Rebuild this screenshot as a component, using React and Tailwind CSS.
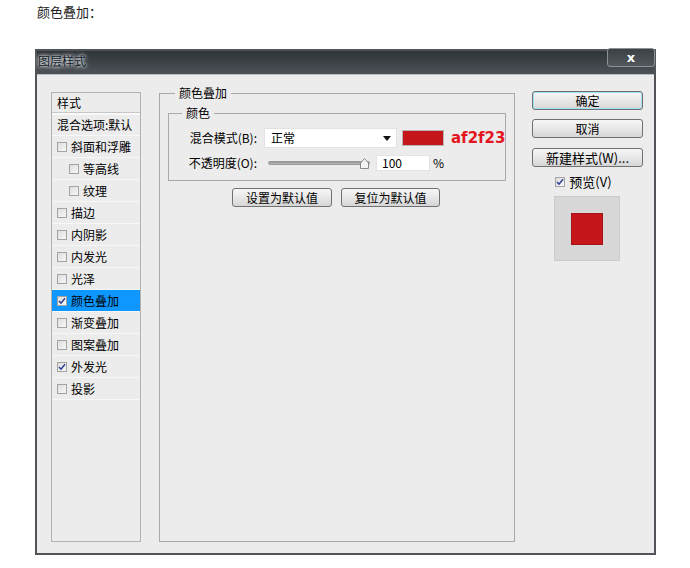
import React from "react";

const items = [
  { label: "斜面和浮雕" },
  { label: "等高线", indent: true },
  { label: "纹理", indent: true },
  { label: "描边" },
  { label: "内阴影" },
  { label: "内发光" },
  { label: "光泽" },
  { label: "颜色叠加", checked: true, active: true },
  { label: "渐变叠加" },
  { label: "图案叠加" },
  { label: "外发光", checked: true },
  { label: "投影" },
];

const Check = ({ checked }) => (
  <span className="w-[10px] h-[10px] border border-[#a3a3a3] bg-gradient-to-br from-[#dedede] to-[#f7f7f7] flex items-center justify-center shrink-0">
    {checked && (
      <svg width="8" height="8" viewBox="0 0 8 8">
        <path d="M1 4 L3 6.2 L7 1.2" fill="none" stroke="#2a3f8f" strokeWidth="1.5" />
      </svg>
    )}
  </span>
);

const Btn = ({ children, className = "" }) => (
  <div
    className={`h-[19px] flex items-center justify-center border border-[#707070] rounded-[3px] bg-gradient-to-b from-[#f6f6f6] via-[#e8e8e8] to-[#d6d6d6] text-[12px] text-black ${className}`}
  >
    {children}
  </div>
);

export default function App() {
  return (
    <div
      className="w-[690px] h-[568px] bg-white text-black"
      style={{ fontFamily: '"Noto Sans CJK SC", "DejaVu Sans", sans-serif' }}
    >
      <div className="h-[49px] pl-[37px] pt-[3px] text-[13px] leading-[18px] text-[#222]">颜色叠加：</div>

      {/* dialog */}
      <div className="ml-[35px] w-[621px] h-[506px] border-2 border-[#505458] relative flex flex-col bg-[#ececec]">
        <div className="h-[23px] bg-gradient-to-b from-[#2f3439] to-[#4c5257] flex items-start pt-[3px] pl-[1px]">
          <span className="text-[12px] leading-[14px] text-[#0e1b29] [text-shadow:0_0_5px_#ffffff,0_0_3px_#ffffff]">
            图层样式
          </span>
        </div>
        <div className="absolute -top-[3px] right-[-1px] w-[48px] h-[19px] rounded-[3px] border border-[#8c9196] bg-gradient-to-b from-[#3c4146] to-[#52575c] flex items-center justify-center">
          <span className="text-white font-bold text-[13px] leading-none" style={{ fontFamily: '"DejaVu Sans", sans-serif' }}>
            x
          </span>
        </div>

        {/* body */}
        <div className="flex-1 flex pl-[14px] pt-[10px] border-t border-[#b9bec2]">
          {/* list */}
          <div className="mt-[7px] w-[90px] h-[450px] shrink-0 border border-[#b2b2b2] bg-[#ececec] flex flex-col text-[12px]">
            <div className="h-[20px] flex items-center pl-[5px] border-b border-[#c8c8c8]">样式</div>
            <div className="h-[23px] flex items-center pl-[5px] border-t-2 border-[#f8f8f8] border-b border-b-[#f8f8f8]">
              混合选项:默认
            </div>
            {items.map((it) => (
              <div
                key={it.label}
                className={`h-[22px] flex items-center gap-[4px] border-b border-[#f7f7f7] ${
                  it.indent ? "pl-[17px]" : "pl-[5px]"
                } ${it.active ? "bg-[#0d97ff]" : ""}`}
              >
                <Check checked={it.checked} />
                <span>{it.label}</span>
              </div>
            ))}
          </div>

          {/* main fieldset */}
          <fieldset className="ml-[18px] w-[356px] min-w-0 shrink-0 h-[457px] border border-[#a9a9a9] text-[12px]">
            <legend className="ml-[15px] px-[4px] leading-[16px]">颜色叠加</legend>
            <fieldset className="mt-[4px] mx-[8px] w-[338px] min-w-0 h-[76px] border border-[#a9a9a9]">
              <legend className="ml-[13px] px-[4px] leading-[16px]">颜色</legend>
              <div className="mt-[7px] flex items-center h-[20px] whitespace-nowrap">
                <span className="w-[89px] shrink-0 text-right pr-[1px]">混合模式(B):</span>
                <div className="ml-[6px] w-[133px] shrink-0 h-[20px] bg-white border border-[#e2e2e2] flex items-center pl-[6px] pr-[5px] justify-between">
                  <span>正常</span>
                  <svg width="8" height="5" viewBox="0 0 8 5">
                    <path d="M0 0 H8 L4 5 Z" fill="#111" />
                  </svg>
                </div>
                <div className="ml-[5px] w-[42px] shrink-0 h-[16px] bg-[#c5161c] border border-[#b5b5b5]" />
                <span
                  className="ml-[7px] text-[15px] font-bold text-[#e3151f] leading-none"
                  style={{ fontFamily: '"DejaVu Sans", sans-serif' }}
                >
                  af2f23
                </span>
              </div>
              <div className="mt-[7px] flex items-center h-[16px]">
                <span className="w-[89px] text-right pr-[1px]">不透明度(O):</span>
                <div className="ml-[10px] w-[102px] h-[12px] relative flex items-center">
                  <div className="w-full h-[4px] rounded-full bg-gradient-to-b from-[#8c8c8c] to-[#c4c4c4] border border-[#9a9a9a]" />
                  <svg className="absolute right-[1px] top-[1px]" width="9" height="11" viewBox="0 0 9 11">
                    <path d="M4.5 0.5 L8.5 5 V10.5 H0.5 V5 Z" fill="#f4f4f4" stroke="#8a8a8a" />
                  </svg>
                </div>
                <div className="ml-[6px] w-[54px] h-[16px] bg-white border border-[#e4e4e4] flex items-center pl-[5px]">
                  100
                </div>
                <span className="ml-[3px]">%</span>
              </div>
            </fieldset>
            <div className="mt-[7px] ml-[72px] flex gap-[9px]">
              <Btn className="w-[100px]">设置为默认值</Btn>
              <Btn className="w-[99px]">复位为默认值</Btn>
            </div>
          </fieldset>

          {/* right column */}
          <div className="ml-[17px] w-[111px] shrink-0 flex flex-col text-[12px]">
            <Btn className="mt-[6px] border-[#3aa7d8] shadow-[inset_0_0_0_1px_#9fe0f7]">确定</Btn>
            <Btn className="mt-[9px]">取消</Btn>
            <Btn className="mt-[10px] text-[13px]">新建样式(W)...</Btn>
            <div className="mt-[8px] h-[14px] flex items-center justify-center gap-[4px] pr-[8px] text-[13px]">
              <Check checked />
              <span>预览(V)</span>
            </div>
            <div className="mt-[7px] ml-[22px] w-[66px] h-[65px] bg-[#d7d7d7] border border-[#cacaca] flex items-center justify-center">
              <div className="w-[32px] h-[32px] bg-[#c5161c] border border-[#a81318]" />
            </div>
          </div>
        </div>
      </div>
    </div>
  );
}
